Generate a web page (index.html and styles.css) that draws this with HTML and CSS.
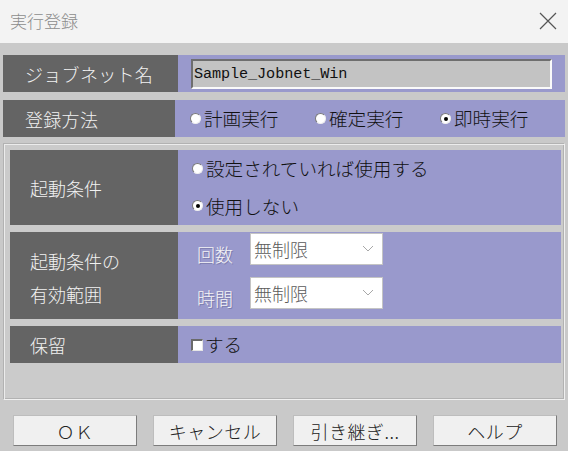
FILE: index.html
```html
<!DOCTYPE html>
<html lang="ja">
<head>
<meta charset="utf-8">
<link rel="stylesheet" href="styles.css">
</head>
<body>
<div class="window">
  <div class="titlebar">
    <span class="title">実行登録</span>
    <svg class="close" width="20" height="20" viewBox="0 0 20 20"><path d="M2 2 L18 18 M18 2 L2 18" stroke="#555" stroke-width="1.2" fill="none"/></svg>
  </div>
  <div class="content">
    <div class="row row-top">
      <div class="label label-top">ジョブネット名</div>
      <div class="field field-input">
        <div class="textbox">Sample_Jobnet_Win</div>
      </div>
    </div>
    <div class="row row-top row-method">
      <div class="label label-top">登録方法</div>
      <div class="field field-radios">
        <span class="opt"><span class="radio"></span>計画実行</span>
        <span class="opt"><span class="radio"></span>確定実行</span>
        <span class="opt"><span class="radio checked"></span>即時実行</span>
      </div>
    </div>
    <div class="group">
      <div class="row row-cond">
        <div class="label label-in">起動条件</div>
        <div class="field field-stack">
          <span class="opt"><span class="radio"></span>設定されていれば使用する</span>
          <span class="opt"><span class="radio checked"></span>使用しない</span>
        </div>
      </div>
      <div class="row row-range">
        <div class="label label-in label-two">
          <span>起動条件の</span>
          <span>有効範囲</span>
        </div>
        <div class="field field-selects">
          <div class="selline">
            <span class="dlabel">回数</span>
            <div class="select"><span>無制限</span>
              <svg width="12" height="8" viewBox="0 0 12 8"><path d="M1 1 L6 6 L11 1" stroke="#a8a8a8" stroke-width="1" fill="none"/></svg>
            </div>
          </div>
          <div class="selline">
            <span class="dlabel">時間</span>
            <div class="select"><span>無制限</span>
              <svg width="12" height="8" viewBox="0 0 12 8"><path d="M1 1 L6 6 L11 1" stroke="#a8a8a8" stroke-width="1" fill="none"/></svg>
            </div>
          </div>
        </div>
      </div>
      <div class="row row-hold">
        <div class="label label-in">保留</div>
        <div class="field field-check">
          <span class="opt"><span class="checkbox"></span>する</span>
        </div>
      </div>
    </div>
    <div class="buttons">
      <button class="btn">ＯＫ</button>
      <button class="btn">キャンセル</button>
      <button class="btn">引き継ぎ...</button>
      <button class="btn">ヘルプ</button>
    </div>
  </div>
</div>
</body>
</html>
```

FILE: styles.css
```css
* { box-sizing: border-box; }
html, body {
  margin: 0;
  padding: 0;
}
body {
  width: 568px;
  height: 451px;
  overflow: hidden;
  font-family: "Noto Sans CJK JP", "Noto Sans", sans-serif;
  font-size: 18px;
  font-weight: 300;
  background: #c9c9c9;
}
.window {
  width: 568px;
  height: 451px;
  display: flex;
  flex-direction: column;
}
.titlebar {
  height: 43px;
  background: #f3f3f3;
  display: flex;
  align-items: center;
  justify-content: space-between;
  padding: 0 10px 2px 10px;
}
.title {
  color: #8c8c8c;
  font-size: 17px;
  line-height: 1;
}
.content {
  flex: 1;
  background: #c9c9c9;
  padding: 12px 3px 0 3px;
  display: flex;
  flex-direction: column;
}
.row {
  display: flex;
}
.row-top {
  height: 37px;
}
.row-method {
  margin-top: 8px;
}
.label {
  background: #646464;
  color: #f2f2f2;
  display: flex;
  align-items: center;
  line-height: 1;
}
.label-top {
  width: 175px;
  padding-left: 22px;
  letter-spacing: 0.3px;
}
.label-in {
  width: 168px;
  padding-left: 20px;
}
.label-two {
  flex-direction: column;
  align-items: flex-start;
  justify-content: center;
  gap: 15px;
  padding-top: 4px;
}
.field {
  flex: 1;
  background: #9999cc;
  color: #111;
  font-size: 18.6px;
}
.field-input {
  padding: 4px 13px 3px 13px;
}
.textbox {
  height: 30px;
  background: #c3c3c3;
  border-top: 2px solid #6e6e6e;
  border-left: 2px solid #6e6e6e;
  border-bottom: 2px solid #fafafa;
  border-right: 2px solid #fafafa;
  font-family: "Liberation Mono", "DejaVu Sans Mono", monospace;
  font-size: 15.2px;
  font-weight: 400;
  color: #111;
  padding-left: 1px;
  display: flex;
  align-items: center;
  letter-spacing: -0.1px;
}
.field-radios {
  display: flex;
  align-items: center;
  padding-left: 15px;
}
.field-radios .opt {
  width: 125px;
}
.opt {
  display: flex;
  align-items: center;
  line-height: 1;
}
.radio {
  width: 11px;
  height: 11px;
  border-radius: 50%;
  background: #fff;
  border: 1px solid #7a7a7a;
  border-right-color: #eeeeee;
  border-bottom-color: #eeeeee;
  margin-right: 3px;
  position: relative;
  flex: none;
}
.radio.checked::after {
  content: "";
  position: absolute;
  left: 2.5px;
  top: 2.5px;
  width: 4px;
  height: 4px;
  border-radius: 50%;
  background: #000;
}
.group {
  margin-top: 6px;
  height: 257px;
  border: 1px solid #b2b2b2;
  border-right-color: #f0f0f0;
  border-bottom-color: #f0f0f0;
  box-shadow: inset 1px 1px 0 #ececec, inset -1px -1px 0 #b2b2b2;
  background: #cbcbcb;
  padding: 6px 3px 0 6px;
  display: flex;
  flex-direction: column;
  gap: 7px;
}
.row-cond {
  height: 75px;
}
.field-stack {
  display: flex;
  flex-direction: column;
  justify-content: center;
  gap: 19px;
  padding-left: 14px;
  padding-bottom: 1px;
}
.row-range {
  height: 87px;
}
.field-selects {
  display: flex;
  flex-direction: column;
  gap: 12px;
  padding-top: 1px;
  padding-left: 19px;
  font-size: 18px;
}
.selline {
  display: flex;
  align-items: center;
  height: 32px;
}
.dlabel {
  width: 53px;
  color: #f4f4f6;
  text-shadow: 1px 1px 0 #7c7cae;
  line-height: 1;
  padding-top: 10px;
}
.select {
  width: 133px;
  height: 32px;
  background: #fff;
  border: 1px solid #c4c4c4;
  display: flex;
  align-items: center;
  justify-content: space-between;
  padding: 0 8px 0 3px;
  color: #5a5a5a;
  line-height: 1;
}
.row-hold {
  height: 37px;
}
.field-check {
  display: flex;
  align-items: center;
  padding-left: 13px;
}
.checkbox {
  width: 12px;
  height: 12px;
  background: #fff;
  border-top: 2px solid #6a6a6a;
  border-left: 2px solid #6a6a6a;
  border-right: 1px solid #e6e6e6;
  border-bottom: 1px solid #e6e6e6;
  margin-right: 2px;
  flex: none;
}
.buttons {
  display: flex;
  gap: 16px;
  padding-left: 10px;
  margin-top: 15px;
}
.btn {
  width: 124px;
  height: 31px;
  background: #f0f0f0;
  border: 1px solid #bdbdbd;
  border-right-color: #7c7c7c;
  border-bottom-color: #7c7c7c;
  font-family: "Noto Sans CJK JP", "Noto Sans", sans-serif;
  font-size: 18px;
  font-weight: 300;
  color: #222;
  padding: 0;
  line-height: 1;
  letter-spacing: 0.5px;
}
```
